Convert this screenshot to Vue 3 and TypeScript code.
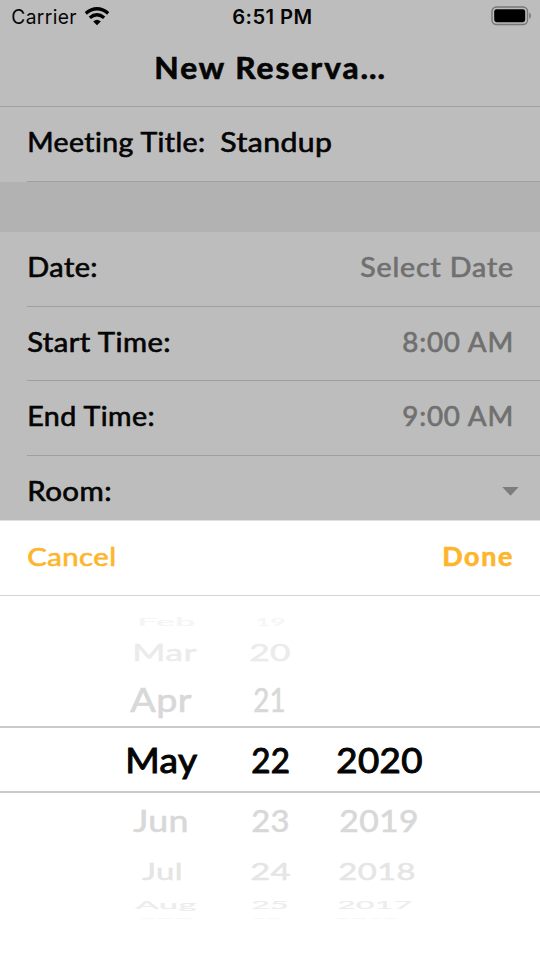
<script setup lang="ts">
import { h } from 'vue'

interface FitProps {
  text: string
  width: number
  cap: number
  size: number
}

// A text run whose box is exactly its cap height tall and its given width wide.
const FitText = (props: FitProps) => {
  const ratio = Number((props.cap / (props.size * 0.72)).toFixed(4))
  return h('svg', { width: props.width, height: props.cap, class: 'fit' }, [
    h(
      'text',
      {
        x: -0.8,
        y: 0,
        'font-size': props.size,
        textLength: props.width + 1.8,
        lengthAdjust: 'spacingAndGlyphs',
        transform: `translate(0 ${props.cap}) scale(1 ${ratio})`,
      },
      props.text,
    ),
  ])
}
FitText.props = ['text', 'width', 'cap', 'size']

interface Field {
  label: string
  labelWidth: number
  value?: string
  valueWidth?: number
}

const fields: Field[] = [
  { label: 'Date:', labelWidth: 69, value: 'Select Date', valueWidth: 152 },
  { label: 'Start Time:', labelWidth: 142, value: '8:00 AM', valueWidth: 110 },
  { label: 'End Time:', labelWidth: 126, value: '9:00 AM', valueWidth: 110 },
  { label: 'Room:', labelWidth: 83 },
]

interface Cell {
  text: string
  before: number
  width: number
}
interface WheelRow {
  gap: number
  cap: number
  tone: string
  cells: Cell[]
}

const cell = (text: string, before: number, width: number): Cell => ({ text, before, width })

const wheel: WheelRow[] = [
  { gap: 21, cap: 8.5, tone: 't1', cells: [cell('Feb', 138, 56.5), cell('19', 61.5, 29)] },
  { gap: 18, cap: 17, tone: 't2', cells: [cell('Mar', 133, 63), cell('20', 54, 40)] },
  { gap: 28.5, cap: 23, tone: 't3', cells: [cell('Apr', 131, 60), cell('21', 63, 31)] },
  { gap: 36, cap: 24.5, tone: 'selected', cells: [cell('May', 126, 70.5), cell('22', 55, 37.5), cell('2020', 48, 85)] },
  { gap: 36.5, cap: 22.5, tone: 't3', cells: [cell('Jun', 134, 54), cell('23', 63.5, 37), cell('2019', 51.5, 78)] },
  { gap: 31.5, cap: 16.5, tone: 't2b', cells: [cell('Jul', 143, 39), cell('24', 69, 39), cell('2018', 49, 76)] },
  { gap: 21.5, cap: 8, tone: 't1b', cells: [cell('Aug', 136, 60), cell('25', 56, 36), cell('2017', 50, 73.5)] },
  { gap: 8, cap: 1.5, tone: 'edge', cells: [cell('Sep', 140, 52), cell('26', 60, 28), cell('2016', 55, 64)] },
]
</script>

<template>
  <main class="screen">
    <header class="header">
      <div class="status">
        <div class="network">
          <FitText class="carrier" text="Carrier" :width="64" :cap="14" :size="19.5" />
          <svg class="wifi" width="26" height="19" viewBox="0 0 26 19">
            <path d="M1.8 6.3Q13 -2.6 24.2 6.3" />
            <path d="M5.8 10.7Q13 4.8 20.2 10.7" />
            <path class="dot" d="M9.2 14.4Q13 11.2 16.8 14.4L13 18.2Z" />
          </svg>
        </div>
        <FitText class="clock" text="6:51 PM" :width="78.5" :cap="14" :size="19.5" />
        <svg class="battery" width="41" height="20" viewBox="0 0 41 20">
          <rect class="shell" x="1" y="1" width="35.5" height="17.5" rx="4.5" />
          <rect class="charge" x="3.2" y="3.2" width="31" height="13" rx="2.4" />
          <path class="cap" d="M38.2 6.5Q40 7.5 40 9.7Q40 12 38.2 13Z" />
        </svg>
      </div>
      <h1 class="title"><FitText text="New Reserva…" :width="231" :cap="21.5" :size="29" /></h1>
    </header>

    <section class="form">
      <div class="field first">
        <FitText text="Meeting Title:" :width="176.5" :cap="19.5" :size="26.5" />
        <FitText class="entry" text="Standup" :width="110.5" :cap="19.5" :size="26.5" />
      </div>
      <div class="divider" />
      <div v-for="f in fields" :key="f.label" class="field">
        <FitText :text="f.label" :width="f.labelWidth" :cap="19.5" :size="26.5" />
        <FitText v-if="f.value" class="value" :text="f.value" :width="f.valueWidth!" :cap="19.5" :size="26.5" />
        <svg v-else class="caret" width="17" height="9" viewBox="0 0 17 9"><path d="M.3 0H16.7L8.5 8.8Z" /></svg>
      </div>
    </section>

    <section class="sheet">
      <div class="actions">
        <FitText text="Cancel" :width="87.5" :cap="18.5" :size="26" />
        <FitText class="done" text="Done" :width="70" :cap="18.5" :size="26" />
      </div>
      <div class="wheel">
        <div
          v-for="(row, i) in wheel"
          :key="i"
          class="row"
          :class="row.tone"
          :style="{ marginTop: row.gap + 'px', height: row.cap + 'px' }"
        >
          <FitText
            v-for="c in row.cells"
            :key="c.text"
            :text="c.text"
            :width="c.width"
            :cap="row.cap"
            :size="33"
            :style="{ marginLeft: c.before + 'px' }"
          />
        </div>
        <div class="selection" />
      </div>
    </section>
  </main>
</template>

<style>
body {
  margin: 0;
  background: #fff;
}
</style>

<style scoped>
.screen {
  width: 540px;
  height: 958px;
  overflow: hidden;
  display: flex;
  flex-direction: column;
  background: #bdbdbd;
  color: #050505;
  font-family: Lato, "Liberation Sans", sans-serif;
}
.fit {
  display: block;
  flex: none;
  overflow: visible;
  fill: currentColor;
  stroke: currentColor;
  stroke-width: 0.65px;
  letter-spacing: 0.4px;
}
.header {
  box-sizing: border-box;
  height: 107px;
  flex: none;
  border-bottom: 1px solid #a0a0a1;
}
.status {
  display: grid;
  grid-template-columns: 1fr auto 1fr;
  height: 33px;
  padding: 0 8px 0 12px;
  box-sizing: border-box;
  align-items: center;
  font-family: Inter, sans-serif;
}
.network {
  display: flex;
  align-items: center;
  gap: 8px;
}
.carrier {
  stroke: none;
}
.clock {
  stroke: none;
  font-weight: 600;
}
.wifi {
  fill: none;
  stroke: #000;
  stroke-width: 3.4px;
}
.wifi .dot {
  fill: #000;
  stroke: none;
}
.battery {
  justify-self: end;
  margin-top: -1px;
}
.shell {
  fill: none;
  stroke: #777;
  stroke-width: 1.4px;
}
.charge {
  fill: #000;
}
.cap {
  fill: #777;
}
.title {
  display: flex;
  justify-content: center;
  margin: 24px 0 0;
  font-size: 29px;
  font-weight: 700;
}
.title .fit {
  letter-spacing: 1.8px;
}
.form {
  height: 413px;
  flex: none;
  overflow: hidden;
}
.field {
  box-sizing: border-box;
  height: 74.5px;
  margin-left: 27px;
  padding: 25px 27px 0 1px;
  display: flex;
  align-items: flex-start;
  border-bottom: 1px solid #9f9fa0;
}
.field.first {
  height: 75px;
}
.entry {
  margin-left: 16px;
}
.divider {
  height: 50px;
  background: #b2b2b2;
}
.value {
  margin-left: auto;
  color: #707070;
  letter-spacing: 0.8px;
}
.caret {
  margin: 6px -6px 0 auto;
  fill: #7d7d7d;
}
.sheet {
  flex: 1;
  background: #fff;
  border-top: 1px solid #e0e0e2;
}
.actions {
  box-sizing: border-box;
  height: 75px;
  padding: 26px 27.5px 0 28px;
  display: flex;
  justify-content: space-between;
  border-bottom: 1px solid #d5d5d6;
  color: #fdb62b;
}
.done {
  font-weight: 700;
  letter-spacing: 1.6px;
}
.wheel {
  position: relative;
  display: flow-root;
  height: 362px;
}
.row {
  display: flex;
}
.selected {
  color: #050505;
}
.selected .fit {
  stroke-width: 1px;
}
.t1 {
  color: #f5f5f5;
}
.t2 {
  color: #ebebeb;
}
.t3 {
  color: #d8d8d8;
}
.t2b {
  color: #e5e5e5;
}
.t1b {
  color: #ededed;
}
.edge {
  color: #f5f5f5;
}
.selection {
  position: absolute;
  top: 130px;
  left: 0;
  right: 0;
  height: 63px;
  border-top: 2px solid #cacacc;
  border-bottom: 2px solid #cacacc;
}
</style>
